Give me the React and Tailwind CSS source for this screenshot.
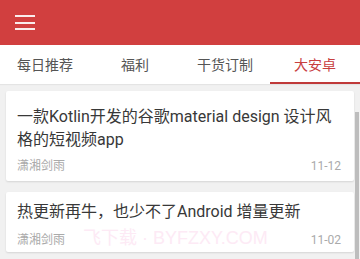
import { useState } from 'react'

const tabs = ['每日推荐', '福利', '干货订制', '大安卓']

const posts = [
  { title: '一款Kotlin开发的谷歌material design 设计风格的短视频app', author: '潇湘剑雨', date: '11-12', pad: 'pt-[14px] pb-[7px]', gap: 'mt-[7px]' },
  { title: '热更新再牛，也少不了Android 增量更新', author: '潇湘剑雨', date: '11-02', pad: 'pt-[8px] pb-[4px]', gap: 'mt-[9px]' },
]

export default function App() {
  const [active, setActive] = useState(3)

  return (
    <div className="relative w-[360px] h-[259px] overflow-hidden bg-[#f1f1f1] font-['Roboto','Noto_Sans_CJK_SC',sans-serif]">
      <header className="h-[45px] bg-[#d13f3f] flex items-center pl-[15px]">
        <button className="flex flex-col gap-[4.5px] w-[20px]">
          <span className="block h-[2px] bg-white/90" />
          <span className="block h-[2px] bg-white/90" />
          <span className="block h-[2px] bg-white/90" />
        </button>
      </header>

      <nav className="h-[39px] bg-white flex shadow-[0_1px_1px_rgba(0,0,0,0.05)]">
        {tabs.map((t, i) => (
          <button key={t} onClick={() => setActive(i)}
            className={`relative flex-1 flex items-center justify-center text-[14px] leading-none ${i === active ? 'text-[#c8403f]' : 'text-[#555]'}`}>
            {t}
            {i === active && <span className="absolute left-0 right-0 bottom-0 h-[2.5px] bg-[#c03a3a]" />}
          </button>
        ))}
      </nav>

      <div className="px-[6px] pt-[7px] flex flex-col gap-[11px]">
        {posts.map((p, idx) => (
          <div key={idx} className={`bg-white rounded-[2px] shadow-[0_1px_2px_rgba(0,0,0,0.12)] px-[11px] ${p.pad}`}>
            <p className="text-[16px] leading-[23px] text-[#383838]">{p.title}</p>
            <div className={`flex justify-between items-center text-[12px] leading-[16px] text-[#aaa] ${p.gap}`}>
              <span>{p.author}</span>
              <span className="pr-[2px]">{p.date}</span>
            </div>
          </div>
        ))}
      </div>

      {/* scrollbar */}
      <div className="absolute right-[1px] top-[112px] bottom-0 w-[4px] bg-[#bdbdbd]" />

      {/* watermark */}
      <div className="absolute left-[83px] top-[227px] text-[18px] leading-[22px] text-[#fdeaf5] pointer-events-none whitespace-nowrap font-['Liberation_Sans','Noto_Sans_CJK_SC',sans-serif]">
        飞下载 · BYFZXY.COM
      </div>
    </div>
  )
}
